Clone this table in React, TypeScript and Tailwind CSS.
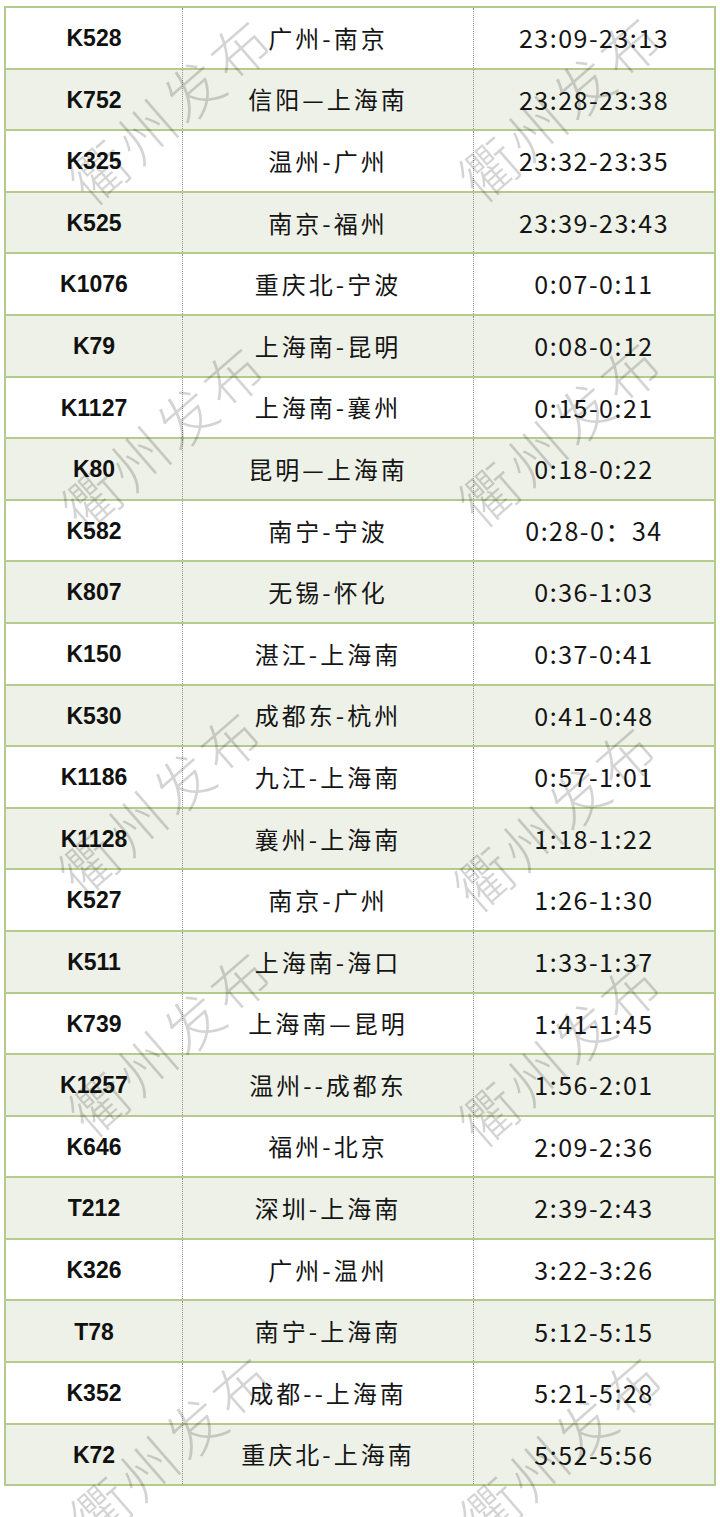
import React from 'react';

type Row = { no: string; route: string; time: string };

const rows: Row[] = [
  { no: 'K528', route: '广州-南京', time: '23:09-23:13' },
  { no: 'K752', route: '信阳—上海南', time: '23:28-23:38' },
  { no: 'K325', route: '温州-广州', time: '23:32-23:35' },
  { no: 'K525', route: '南京-福州', time: '23:39-23:43' },
  { no: 'K1076', route: '重庆北-宁波', time: '0:07-0:11' },
  { no: 'K79', route: '上海南-昆明', time: '0:08-0:12' },
  { no: 'K1127', route: '上海南-襄州', time: '0:15-0:21' },
  { no: 'K80', route: '昆明—上海南', time: '0:18-0:22' },
  { no: 'K582', route: '南宁-宁波', time: '0:28-0：34' },
  { no: 'K807', route: '无锡-怀化', time: '0:36-1:03' },
  { no: 'K150', route: '湛江-上海南', time: '0:37-0:41' },
  { no: 'K530', route: '成都东-杭州', time: '0:41-0:48' },
  { no: 'K1186', route: '九江-上海南', time: '0:57-1:01' },
  { no: 'K1128', route: '襄州-上海南', time: '1:18-1:22' },
  { no: 'K527', route: '南京-广州', time: '1:26-1:30' },
  { no: 'K511', route: '上海南-海口', time: '1:33-1:37' },
  { no: 'K739', route: '上海南—昆明', time: '1:41-1:45' },
  { no: 'K1257', route: '温州--成都东', time: '1:56-2:01' },
  { no: 'K646', route: '福州-北京', time: '2:09-2:36' },
  { no: 'T212', route: '深圳-上海南', time: '2:39-2:43' },
  { no: 'K326', route: '广州-温州', time: '3:22-3:26' },
  { no: 'T78', route: '南宁-上海南', time: '5:12-5:15' },
  { no: 'K352', route: '成都--上海南', time: '5:21-5:28' },
  { no: 'K72', route: '重庆北-上海南', time: '5:52-5:56' },
];

// watermark centres, picked off the screenshot
const marks = [
  { x: 170, y: 108 }, { x: 560, y: 105 },
  { x: 163, y: 435 }, { x: 560, y: 430 },
  { x: 160, y: 800 }, { x: 555, y: 815 },
  { x: 170, y: 1040 }, { x: 560, y: 1050 },
  { x: 172, y: 1445 }, { x: 562, y: 1445 },
];

const cjk = { fontFamily: '"Noto Sans CJK SC", "Noto Sans", sans-serif' };

export default function App() {
  return (
    <div className="relative w-[720px] h-[1517px] bg-white overflow-hidden">
      <div className="pt-[6px] px-[4px]">
        <div className="border-t-2 border-x-2 border-[#b5ca8d]">
          {rows.map((r, i) => (
            <div
              key={r.no}
              className={`flex h-[61.6px] border-b-2 border-[#b5ca8d] ${i % 2 ? 'bg-[#eef1e7]' : 'bg-white'}`}
            >
              <div
                className="w-[176px] flex items-center justify-center pt-px text-[23px] font-bold text-[#111]"
                style={{ fontFamily: '"Liberation Sans", Arial, sans-serif' }}
              >
                {r.no}
              </div>
              <div
                className="w-[291px] flex items-center justify-center border-l border-dotted border-[#8f8f8f] text-[24px] tracking-[3px] text-[#151515]"
                style={cjk}
              >
                {r.route}
              </div>
              <div
                className="flex-1 flex items-center justify-center border-l border-dotted border-[#8f8f8f] text-[25px] tracking-[1.5px] text-[#151515]"
                style={cjk}
              >
                {r.time}
              </div>
            </div>
          ))}
        </div>
      </div>

      {/* 衢州发布 watermark */}
      {marks.map((m, i) => (
        <div
          key={i}
          className="absolute pointer-events-none select-none text-[57px] font-light tracking-[5px] text-black/[0.17] whitespace-nowrap -translate-x-1/2 -translate-y-1/2 -rotate-[41deg]"
          style={{ left: m.x, top: m.y, ...cjk }}
        >
          衢州发布
        </div>
      ))}
    </div>
  );
}
